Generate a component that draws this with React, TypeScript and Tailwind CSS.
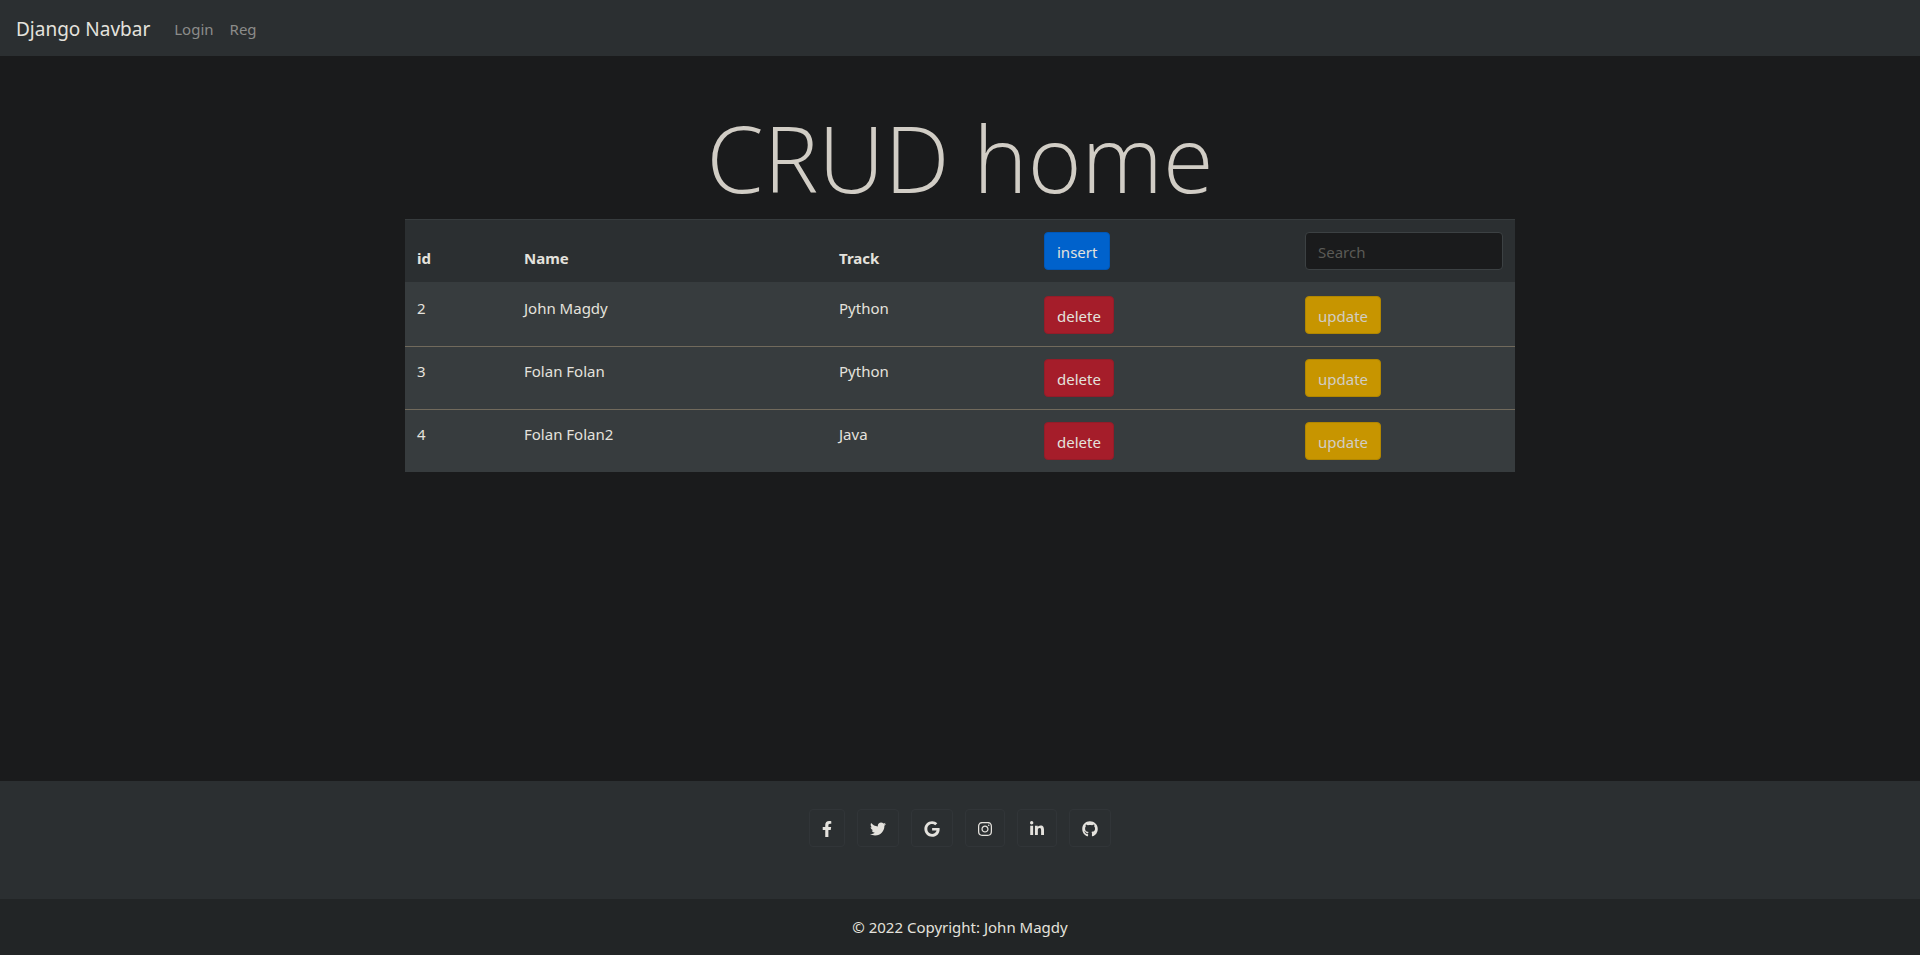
import {
  FaFacebookF,
  FaTwitter,
  FaGoogle,
  FaInstagram,
  FaLinkedinIn,
  FaGithub,
} from "react-icons/fa";

const rows = [
  { id: 2, name: "John Magdy", track: "Python" },
  { id: 3, name: "Folan Folan", track: "Python" },
  { id: 4, name: "Folan Folan2", track: "Java" },
];

const socials = [
  { label: "Facebook", Icon: FaFacebookF, width: "w-[10px]" },
  { label: "Twitter", Icon: FaTwitter, width: "w-4" },
  { label: "Google", Icon: FaGoogle, width: "w-4" },
  { label: "Instagram", Icon: FaInstagram, width: "w-[14px]" },
  { label: "LinkedIn", Icon: FaLinkedinIn, width: "w-[14px]" },
  { label: "GitHub", Icon: FaGithub, width: "w-4" },
];

const button = "block h-[38px] rounded border px-3 pt-0.5";

export default function App() {
  return (
    <div className="flex min-h-screen flex-col bg-[#1a1b1c] font-['Noto_Sans',sans-serif] text-[15px] leading-6 text-[#d1cdc5]">
      <nav className="flex h-14 items-center bg-[#2b2f31] px-4 pt-0.5">
        <a href="#" className="mr-6 text-[19px] text-[#e4e2dd]">
          Django Navbar
        </a>
        <div className="flex gap-4 text-[#8b8c8a]">
          <a href="#login">Login</a>
          <a href="#reg">Reg</a>
        </div>
      </nav>

      <main className="mx-auto w-full max-w-[1110px] grow pt-11">
        <h1 className="mb-1 text-center font-['Open_Sans',sans-serif] text-[92px] leading-[115px] font-light">
          CRUD home
        </h1>
        <table className="w-full table-fixed border-separate border-spacing-0 bg-[#373c3e] text-left text-[#e4e2dd]">
          <colgroup>
            <col className="w-[107px]" />
            <col className="w-[315px]" />
            <col className="w-[205px]" />
            <col className="w-[261px]" />
            <col />
          </colgroup>
          <thead className="bg-[#2b2f31]">
            <tr className="align-bottom *:border-t *:border-b *:border-[#373c3e] *:p-3">
              <th>id</th>
              <th>Name</th>
              <th>Track</th>
              <th className="font-normal">
                <button type="button" className={`${button} border-[#0057b8] bg-[#0062cc]`}>
                  insert
                </button>
              </th>
              <th className="font-normal">
                <input
                  type="search"
                  aria-label="Search"
                  placeholder="Search"
                  className="block h-[38px] w-full rounded border border-[#3c4143] bg-[#1a1b1c] px-3 pt-0.5 placeholder:text-[#5b5a56]"
                />
              </th>
            </tr>
          </thead>
          <tbody>
            {rows.map((row) => (
              <tr
                key={row.id}
                className="align-top *:border-t *:border-[#716a5c] *:p-3 first:*:border-[#373c3e]"
              >
                <td>{row.id}</td>
                <td>{row.name}</td>
                <td>{row.track}</td>
                <td>
                  <button type="button" className={`${button} border-[#931c28] bg-[#a51d2a]`}>
                    delete
                  </button>
                </td>
                <td>
                  <button
                    type="button"
                    className={`${button} border-[#b18600] bg-[#c79500] text-[#d1cdc5]`}
                  >
                    update
                  </button>
                </td>
              </tr>
            ))}
          </tbody>
        </table>
      </main>

      <footer className="bg-[#2b2f31] text-[#e4e2dd]">
        <div className="flex h-[118px] items-start justify-center gap-3 pt-7">
          {socials.map(({ label, Icon, width }) => (
            <a
              key={label}
              href="#"
              aria-label={label}
              className="flex h-[38px] items-center rounded border border-[#313538] px-3 pt-0.5"
            >
              <Icon className={`h-4 ${width}`} />
            </a>
          ))}
        </div>
        <p className="bg-[#222526] p-4 text-center">© 2022 Copyright: John Magdy</p>
      </footer>
    </div>
  );
}
